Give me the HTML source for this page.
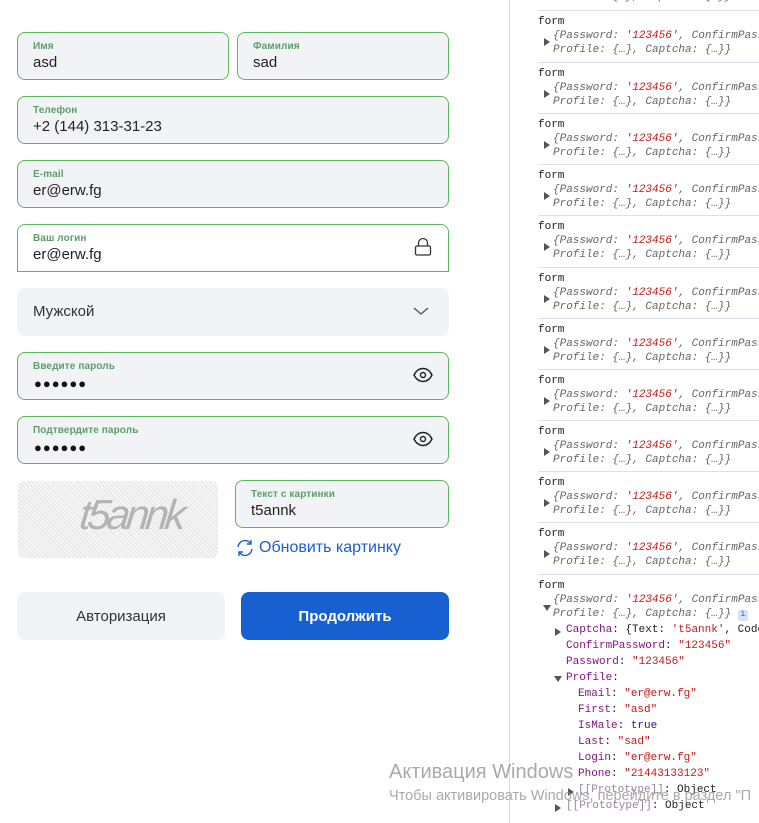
<!DOCTYPE html>
<html><head><meta charset="utf-8"><style>
*{box-sizing:border-box;margin:0;padding:0}
body{width:759px;height:823px;overflow:hidden;background:#fff;position:relative;font-family:"Liberation Sans",sans-serif}
.f{position:absolute;left:17px;width:432px;height:48px;border:1px solid #5cb85c;border-radius:8px;background:#f2f3f6}
.f .l{position:absolute;left:15px;top:8px;font-size:10px;color:#5a9e6a;font-weight:bold;letter-spacing:.1px}
.f .v{position:absolute;left:15px;top:21px;font-size:15px;color:#222}
.dots{position:absolute;left:16px;top:23px;font-size:13px;letter-spacing:1px;color:#111}
.ic{position:absolute;right:14px;top:13px}
.btn{position:absolute;top:592px;height:48px;border-radius:8px;font-size:15px;display:flex;align-items:center;justify-content:center}
#dv{position:absolute;left:509px;top:0;width:250px;height:823px;border-left:1px solid #d4dcea;font-family:"Liberation Mono",monospace;font-size:11px;white-space:nowrap;overflow:hidden}
.e{position:absolute;left:28px;right:0;height:52px;border-top:1px solid #d7e0ee}
.fm{position:absolute;left:0;top:5px;color:#222}
.a{position:absolute;left:15px;color:#666;font-style:italic}
.s{color:#c41a16}
.t{position:absolute;left:6px;top:27px;width:0;height:0;border-left:6px solid #555;border-top:4px solid transparent;border-bottom:4px solid transparent}
.k{color:#881280}.r{color:#c41a16}.b{color:#1a1aa6}
.ln{position:absolute;color:#222}
.p{color:#9a7fa0}
</style></head><body>
<div class="f" style="top:32px;width:212px"><div class="l">Имя</div><div class="v">asd</div></div>
<div class="f" style="top:32px;left:237px;width:212px"><div class="l">Фамилия</div><div class="v">sad</div></div>
<div class="f" style="top:96px"><div class="l">Телефон</div><div class="v">+2 (144) 313-31-23</div></div>
<div class="f" style="top:160px"><div class="l">E-mail</div><div class="v">er@erw.fg</div></div>
<div class="f" style="top:224px;background:#fff;border-radius:8px 8px 0 0"><div class="l">Ваш логин</div><div class="v">er@erw.fg</div>
<svg class="ic" style="top:12px;right:16px" width="18" height="20" viewBox="0 0 18 20" fill="none" stroke="#333" stroke-width="1.3"><rect x="1.5" y="9" width="15" height="9" rx="1.5"/><path d="M4.5 9V6a4.5 4.5 0 0 1 9 0v3"/></svg></div>
<div class="f" style="top:288px;border:none"><div class="v" style="top:15px;left:16px;color:#333">Мужской</div>
<svg class="ic" style="top:18px;right:20px" width="16" height="10" viewBox="0 0 16 10" fill="none" stroke="#555" stroke-width="1.4"><path d="M1 2l7 6 7-6"/></svg></div>
<div class="f" style="top:352px"><div class="l">Введите пароль</div><div class="dots">●●●●●●</div>
<svg class="ic" style="top:14px;right:15px" width="20" height="16" viewBox="0 0 20 16" fill="none" stroke="#222" stroke-width="1.4"><path d="M1 8C3.5 3 6.5 1.5 10 1.5S16.5 3 19 8c-2.5 5-5.5 6.5-9 6.5S3.5 13 1 8z"/><circle cx="10" cy="8" r="2.5"/></svg></div>
<div class="f" style="top:416px"><div class="l">Подтвердите пароль</div><div class="dots">●●●●●●</div>
<svg class="ic" style="top:14px;right:15px" width="20" height="16" viewBox="0 0 20 16" fill="none" stroke="#222" stroke-width="1.4"><path d="M1 8C3.5 3 6.5 1.5 10 1.5S16.5 3 19 8c-2.5 5-5.5 6.5-9 6.5S3.5 13 1 8z"/><circle cx="10" cy="8" r="2.5"/></svg></div>
<div style="position:absolute;left:18px;top:481px;width:200px;height:77px;border-radius:6px;background:repeating-linear-gradient(45deg,#e4e4e4 0 1px,#f6f6f6 1px 3px),#eee;overflow:hidden">
<div style="position:absolute;left:62px;top:10px;font-size:42px;font-style:italic;color:#b3b3b3;letter-spacing:-4px;transform:skewX(-6deg)">t5annk</div></div>
<div class="f" style="top:480px;left:235px;width:214px"><div class="l">Текст с картинки</div><div class="v">t5annk</div></div>
<svg style="position:absolute;left:235px;top:539px" width="20" height="18" viewBox="0 0 20 18" fill="none" stroke="#1a5fd1" stroke-width="1.4"><path d="M3 8a7 7 0 0 1 13-3M17 10a7 7 0 0 1-13 3"/><path d="M16 1v4h-4M4 17v-4h4"/></svg>
<div style="position:absolute;left:259px;top:539px;font-size:16px;color:#1a5fd1">Обновить картинку</div>
<div class="btn" style="left:17px;width:208px;background:#f2f3f6;color:#333">Авторизация</div>
<div class="btn" style="left:241px;width:208px;background:#1660d2;color:#fff;font-weight:bold">Продолжить</div>

<div id="dv">
<div class="a" style="left:43px;top:-9px">Profile: {…}, Captcha: {…}}</div>
<div class="e" style="top:10px"><div class="fm">form</div><div class="t"></div><div class="a" style="top:19px">{Password: <span class="s">'123456'</span>, ConfirmPass</div><div class="a" style="top:33px">Profile: {…}, Captcha: {…}}</div></div>
<div class="e" style="top:62px"><div class="fm">form</div><div class="t"></div><div class="a" style="top:19px">{Password: <span class="s">'123456'</span>, ConfirmPass</div><div class="a" style="top:33px">Profile: {…}, Captcha: {…}}</div></div>
<div class="e" style="top:113px"><div class="fm">form</div><div class="t"></div><div class="a" style="top:19px">{Password: <span class="s">'123456'</span>, ConfirmPass</div><div class="a" style="top:33px">Profile: {…}, Captcha: {…}}</div></div>
<div class="e" style="top:164px"><div class="fm">form</div><div class="t"></div><div class="a" style="top:19px">{Password: <span class="s">'123456'</span>, ConfirmPass</div><div class="a" style="top:33px">Profile: {…}, Captcha: {…}}</div></div>
<div class="e" style="top:215px"><div class="fm">form</div><div class="t"></div><div class="a" style="top:19px">{Password: <span class="s">'123456'</span>, ConfirmPass</div><div class="a" style="top:33px">Profile: {…}, Captcha: {…}}</div></div>
<div class="e" style="top:267px"><div class="fm">form</div><div class="t"></div><div class="a" style="top:19px">{Password: <span class="s">'123456'</span>, ConfirmPass</div><div class="a" style="top:33px">Profile: {…}, Captcha: {…}}</div></div>
<div class="e" style="top:318px"><div class="fm">form</div><div class="t"></div><div class="a" style="top:19px">{Password: <span class="s">'123456'</span>, ConfirmPass</div><div class="a" style="top:33px">Profile: {…}, Captcha: {…}}</div></div>
<div class="e" style="top:369px"><div class="fm">form</div><div class="t"></div><div class="a" style="top:19px">{Password: <span class="s">'123456'</span>, ConfirmPass</div><div class="a" style="top:33px">Profile: {…}, Captcha: {…}}</div></div>
<div class="e" style="top:420px"><div class="fm">form</div><div class="t"></div><div class="a" style="top:19px">{Password: <span class="s">'123456'</span>, ConfirmPass</div><div class="a" style="top:33px">Profile: {…}, Captcha: {…}}</div></div>
<div class="e" style="top:471px"><div class="fm">form</div><div class="t"></div><div class="a" style="top:19px">{Password: <span class="s">'123456'</span>, ConfirmPass</div><div class="a" style="top:33px">Profile: {…}, Captcha: {…}}</div></div>
<div class="e" style="top:522px"><div class="fm">form</div><div class="t"></div><div class="a" style="top:19px">{Password: <span class="s">'123456'</span>, ConfirmPass</div><div class="a" style="top:33px">Profile: {…}, Captcha: {…}}</div></div>
<div class="e" style="top:574px;height:260px"><div class="fm">form</div>
<div style="position:absolute;left:5px;top:30px;border-top:6px solid #555;border-left:4px solid transparent;border-right:4px solid transparent"></div>
<div class="a" style="top:19px">{Password: <span class="s">'123456'</span>, ConfirmPass</div><div class="a" style="top:33px">Profile: {…}, Captcha: {…}} <span style="display:inline-block;width:10px;height:11px;background:#d3e3fd;color:#1a5fd1;font-size:8px;font-style:normal;text-align:center;border-radius:2px">i</span></div>
<div style="position:absolute;left:17px;top:53px;border-left:6px solid #555;border-top:4px solid transparent;border-bottom:4px solid transparent"></div>
<div class="ln" style="left:28px;top:49px"><span class="k">Captcha</span>: {Text: <span class="r">'t5annk'</span>, Code</div>
<div class="ln" style="left:28px;top:65px"><span class="k">ConfirmPassword</span>: <span class="r">"123456"</span></div>
<div class="ln" style="left:28px;top:81px"><span class="k">Password</span>: <span class="r">"123456"</span></div>
<div style="position:absolute;left:16px;top:101px;border-top:6px solid #555;border-left:4px solid transparent;border-right:4px solid transparent"></div>
<div class="ln" style="left:28px;top:97px"><span class="k">Profile</span>:</div>
<div class="ln" style="left:40px;top:113px"><span class="k">Email</span>: <span class="r">"er@erw.fg"</span></div>
<div class="ln" style="left:40px;top:129px"><span class="k">First</span>: <span class="r">"asd"</span></div>
<div class="ln" style="left:40px;top:145px"><span class="k">IsMale</span>: <span class="b">true</span></div>
<div class="ln" style="left:40px;top:161px"><span class="k">Last</span>: <span class="r">"sad"</span></div>
<div class="ln" style="left:40px;top:177px"><span class="k">Login</span>: <span class="r">"er@erw.fg"</span></div>
<div class="ln" style="left:40px;top:193px"><span class="k">Phone</span>: <span class="r">"21443133123"</span></div>
<div style="position:absolute;left:30px;top:213px;border-left:6px solid #555;border-top:4px solid transparent;border-bottom:4px solid transparent"></div>
<div class="ln" style="left:40px;top:209px"><span class="p">[[Prototype]]</span>: Object</div>
<div style="position:absolute;left:17px;top:229px;border-left:6px solid #555;border-top:4px solid transparent;border-bottom:4px solid transparent"></div>
<div class="ln" style="left:28px;top:225px"><span class="p">[[Prototype]]</span>: Object</div>
</div>
</div>
<div style="position:absolute;left:389px;top:761px;font-size:20px;color:rgba(140,140,140,.75);white-space:nowrap">Активация Windows</div>
<div style="position:absolute;left:389px;top:788px;font-size:14.5px;color:rgba(140,140,140,.75);white-space:nowrap">Чтобы активировать Windows, перейдите в раздел "П</div>
</body></html>
